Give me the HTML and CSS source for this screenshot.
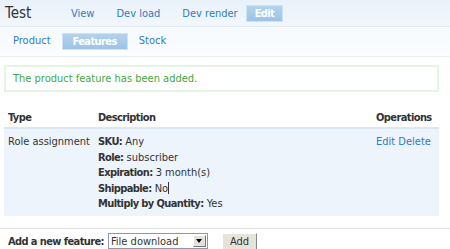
FILE: index.html
```html
<!DOCTYPE html>
<html lang="en">
<head>
  <meta charset="UTF-8">
  <title>Test - Features</title>
  <link rel="stylesheet" href="styles.css">
</head>
<body>
  <div class="header">
    <h1 class="title">Test</h1>
    <ul class="tabs primary">
      <li><a href="#">View</a></li>
      <li><a href="#">Dev load</a></li>
      <li><a href="#">Dev render</a></li>
      <li class="active"><a href="#">Edit</a></li>
    </ul>
  </div>
  <div class="subheader">
    <ul class="tabs secondary">
      <li><a href="#">Product</a></li>
      <li class="active"><a href="#">Features</a></li>
      <li><a href="#">Stock</a></li>
    </ul>
  </div>
  <div class="content">
    <div class="messages">The product feature has been added.</div>
    <table class="features">
      <thead>
        <tr>
          <th class="col-type">Type</th>
          <th>Description</th>
          <th class="col-ops">Operations</th>
        </tr>
      </thead>
      <tbody>
        <tr>
          <td>Role assignment</td>
          <td>
            <div><b>SKU:</b> Any</div>
            <div><b>Role:</b> subscriber</div>
            <div><b>Expiration:</b> 3 month(s)</div>
            <div><b>Shippable:</b> No<span class="caret"></span></div>
            <div><b>Multiply by Quantity:</b> Yes</div>
          </td>
          <td><a href="#">Edit</a> <a href="#">Delete</a></td>
        </tr>
      </tbody>
    </table>
  </div>
  <form class="add-feature">
    <label for="feature">Add a new feature:</label>
    <div class="select-wrap">
      <select id="feature">
        <option>File download</option>
      </select>
      <span class="arrow"></span>
    </div>
    <button type="button">Add</button>
  </form>
</body>
</html>
```

FILE: styles.css
```css
body {
  margin: 0;
  font-family: "DejaVu Sans Condensed", "DejaVu Sans", sans-serif;
  font-size: 11px;
  color: #333;
  background: #fff;
}

b,
th,
.tabs li.active a,
.add-feature label {
  font-weight: bold;
  letter-spacing: -0.6px;
}

a {
  color: #2e7cc4;
  text-decoration: none;
}

.header {
  height: 26px;
  border-bottom: 1px solid #e2eaf2;
  background: linear-gradient(#e9f1fa, #f2f7fc);
  display: flex;
  align-items: center;
}

.title {
  margin: 0 0 0 5px;
  width: 55px;
  font-size: 15px;
  font-weight: normal;
  color: #333;
}

.tabs {
  list-style: none;
  margin: 0;
  padding: 0;
  display: flex;
}

.tabs li a {
  display: block;
  padding: 2px 11px;
}

.tabs li.active a {
  color: #fff;
  background: linear-gradient(#b2d3ee, #9cc4e6);
  border: 1px solid #cfe2f3;
}

.primary li.active a {
  padding: 1px 8px;
  margin-left: -3px;
}

.subheader {
  height: 29px;
  border-bottom: 1px solid #e8edf2;
  background: linear-gradient(#f6f9fd, #fbfdff);
  display: flex;
  align-items: center;
  padding-left: 2px;
}

.secondary li a {
  padding: 1px 11px;
}

.secondary li.active a {
  padding: 1px 10px;
}

.content {
  padding: 8px 11px 0 4px;
}

.messages {
  border: 2px solid #e4f5e4;
  color: #44a844;
  padding: 5px 7px;
  margin-bottom: 16px;
}

.features {
  width: 100%;
  border-collapse: collapse;
}

.features th {
  text-align: left;
  padding: 3px 4px;
  color: #333;
}

.features td {
  vertical-align: top;
  padding: 5px 4px 4px;
  line-height: 15.5px;
  white-space: nowrap;
  background: #edf4fb;
  border-top: 2px solid #dae8f5;
}

.col-type {
  width: 80px;
}

.col-ops {
  width: 59px;
}

.caret {
  display: inline-block;
  width: 1px;
  height: 12px;
  background: #333;
  vertical-align: -2px;
}

.add-feature {
  margin-top: 12px;
  border-top: 1px solid #ddd;
  padding: 4px 8px;
  display: flex;
  align-items: center;
}

.select-wrap {
  position: relative;
  margin-left: 4px;
}

.add-feature select {
  display: block;
  appearance: none;
  width: 100px;
  height: 16px;
  font: 11px "DejaVu Sans Condensed", sans-serif;
  color: #333;
  background: #fff;
  border: 1px solid #7f9db9;
  padding: 0 2px;
}

.arrow {
  position: absolute;
  right: 2px;
  top: 2px;
  width: 11px;
  height: 10px;
  background: #e4e2dc;
  border: 1px solid;
  border-color: #fff #777 #777 #fff;
}

.arrow::after {
  content: "";
  position: absolute;
  left: 2px;
  top: 3px;
  border-left: 3.5px solid transparent;
  border-right: 3.5px solid transparent;
  border-top: 4px solid #000;
}

.add-feature button {
  margin-left: 14px;
  height: 17px;
  width: 35px;
  font: 11px "DejaVu Sans Condensed", sans-serif;
  color: #333;
  background: #e6e3da;
  border: 1px solid;
  border-color: #fff #888 #888 #fff;
  padding: 0;
}
```
